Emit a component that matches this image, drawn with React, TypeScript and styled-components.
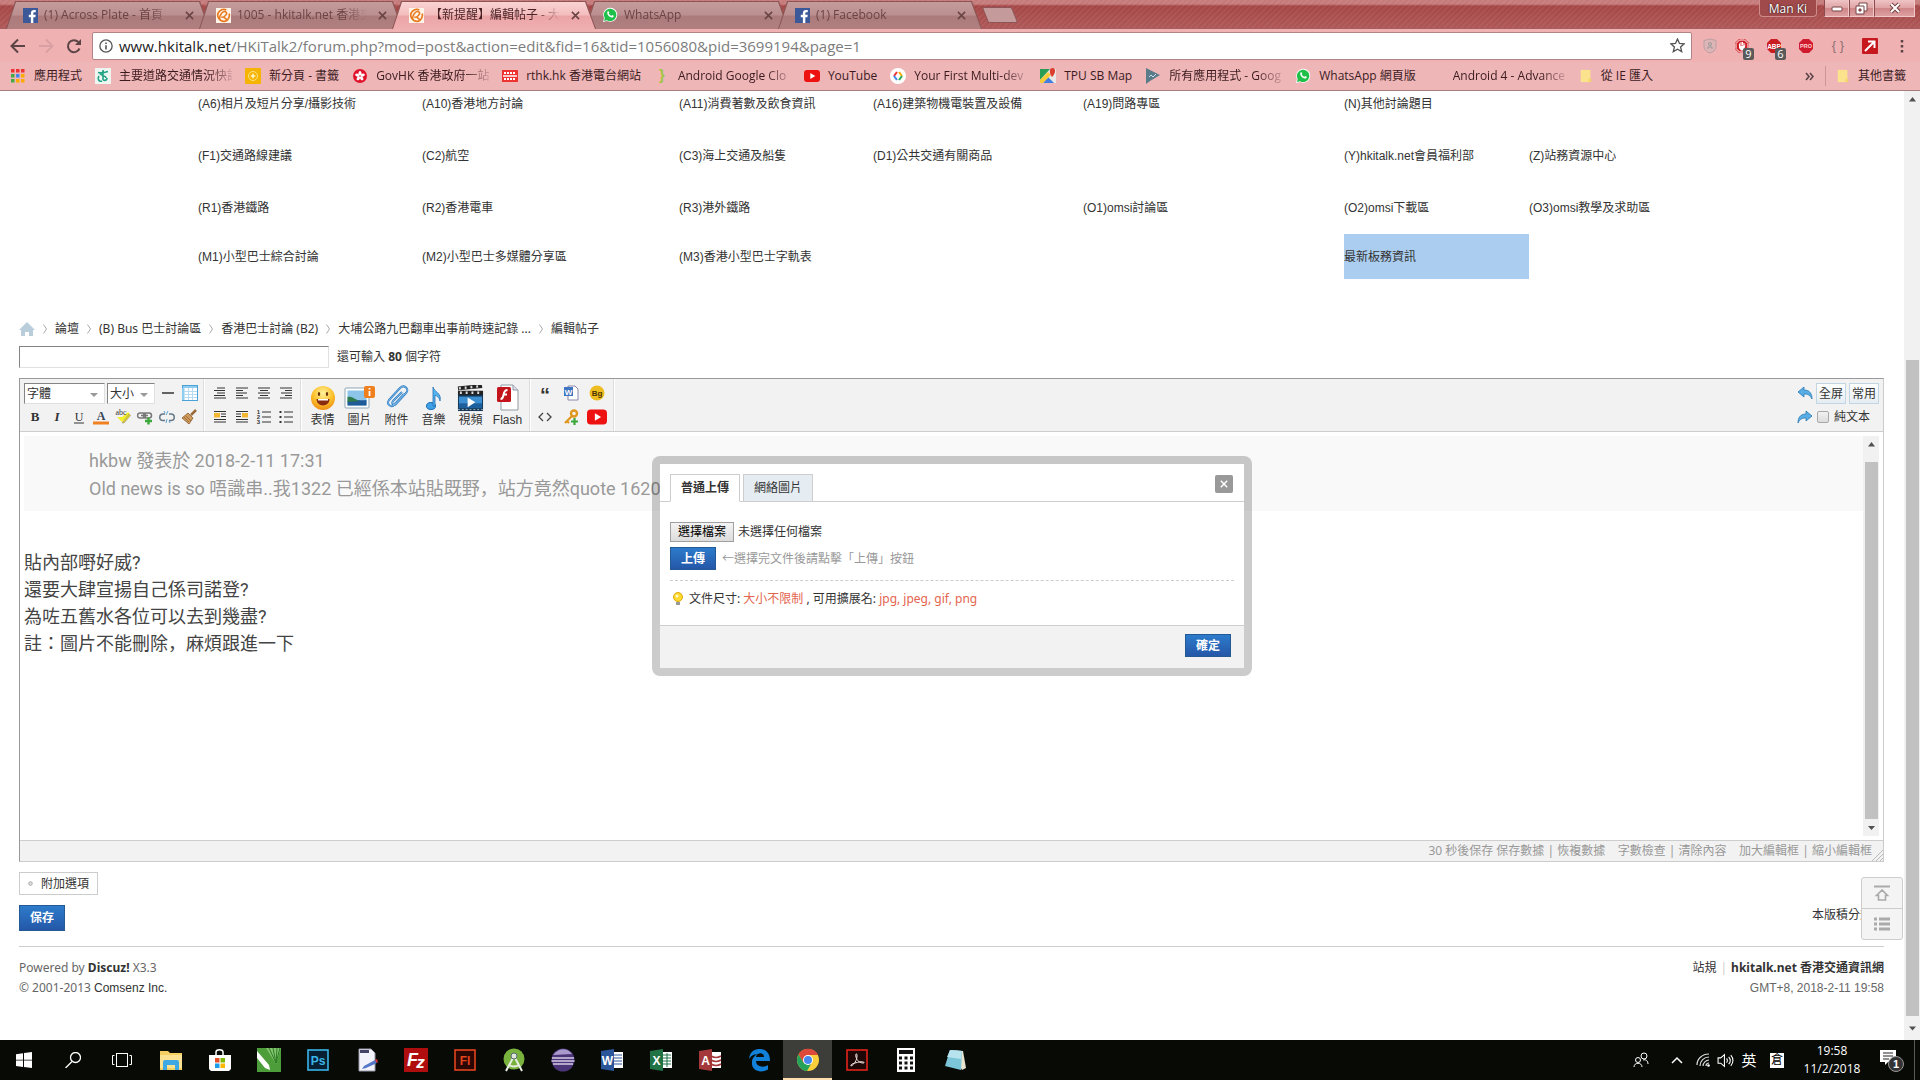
import React from 'react';
import styled, { createGlobalStyle } from 'styled-components';

const UI = `"Open Sans", "Noto Sans CJK TC", sans-serif`;
const ARIAL = `"Liberation Sans", "Noto Sans CJK TC", sans-serif`;
const TAHOMA = `"Noto Sans", "Noto Sans CJK TC", sans-serif`;
const DOC = `Roboto, "Noto Sans CJK JP", sans-serif`;

const Global = createGlobalStyle`
  * { box-sizing: border-box; }
  body { margin: 0; background: #fff; font: 12px/20px ${TAHOMA}; color: #333; }
  button, input, select { font: inherit; color: inherit; margin: 0; padding: 0; }
  button { border: 0; background: none; cursor: pointer; white-space: nowrap; }
  a { color: inherit; text-decoration: none; }
  svg { display: block; flex: none; }
  p { margin: 0; }
`;

const Screen = styled.div`
  height: 100vh;
  display: flex;
  flex-direction: column;
  overflow: hidden;
`;

/* ---------- browser frame ---------- */

const BrowserFrame = styled.header`
  flex: none;
  font-family: ${UI};
  border-bottom: 1px solid #a67c7e;
`;

const TabStrip = styled.div`
  display: flex;
  align-items: flex-start;
  height: 29px;
  padding: 0 5px 0 6px;
  border-bottom: 1px solid #a85d5f;
  background:
    repeating-linear-gradient(135deg, rgba(255, 255, 255, 0.05) 0 2px, transparent 2px 4px),
    linear-gradient(#c67b7b 0 4px, #a54646 6px, #af5757 28px);
`;

const Tab = styled.div<{ $active?: boolean }>`
  position: relative;
  z-index: ${(p) => (p.$active ? 2 : 1)};
  display: flex;
  align-items: center;
  gap: 6px;
  width: 204px;
  height: 28px;
  margin: 1px -11px 0 0;
  padding: 0 14px 0 17px;
  background: #8d5555;
  clip-path: polygon(0 100%, 9px 0, 194px 0, 100% 100%);
  color: ${(p) => (p.$active ? '#4a2226' : '#6b4444')};
  &::before {
    content: '';
    position: absolute;
    z-index: -1;
    inset: 1px 0 0;
    background: ${(p) =>
      p.$active
        ? 'linear-gradient(#f9d3d3, #f4bdbd 13px, #eba4a6 14px, #efafb1)'
        : 'linear-gradient(#c49b9b, #bb8f8f 13px, #ab7b7b 14px, #b08080)'};
    clip-path: polygon(1px 100%, 10px 0, 193px 0, calc(100% - 1px) 100%);
  }
`;

const TabTitle = styled.button`
  flex: 1;
  min-width: 0;
  overflow: hidden;
  text-align: left;
  mask-image: linear-gradient(90deg, #000 105px, transparent 130px);
`;

const IconButton = styled.button<{ $w?: number; $h?: number }>`
  position: relative;
  flex: none;
  display: grid;
  place-items: center;
  width: ${(p) => p.$w ?? 22}px;
  height: ${(p) => p.$h ?? 22}px;
`;

const NewTab = styled.button`
  width: 30px;
  height: 16px;
  margin: 7px 0 0 14px;
  border: 1px solid #8d5555;
  border-radius: 2px;
  background: #c49a9a;
  transform: skewX(22deg);
`;

const WindowControls = styled.div`
  display: flex;
  margin-left: auto;
`;

const UserButton = styled.button`
  height: 17px;
  width: 58px;
  margin-right: 7px;
  border: 1px solid #d08b8b;
  border-top: 0;
  border-radius: 0 0 4px 4px;
  background: #a14a4c;
  color: #fff;
  line-height: 18px;
  text-shadow: 0 0 2px #000;
`;

const WindowButton = styled.button<{ $w: number }>`
  display: grid;
  place-items: center;
  width: ${(p) => p.$w}px;
  height: 17px;
  border: 1px solid #f2c7c7;
  border-top: 0;
  border-left-color: #8b4a4c;
  background: linear-gradient(#efc3c4, #dfa3a5 50%, #cf8587 51%, #dda0a2);
`;

const Toolbar = styled.div`
  display: flex;
  align-items: center;
  height: 33px;
  padding: 0 2px 0 4px;
  background: #f0b1b3;
`;

const Omnibox = styled.label`
  flex: 1;
  display: flex;
  align-items: center;
  gap: 6px;
  height: 28px;
  margin: 0 2px 0 4px;
  padding: 0 6px;
  border: 1px solid #b08386;
  border-radius: 2px;
  background: #fff;
`;

const Url = styled.span`
  flex: 1;
  font-size: 15px;
  color: #7c7c7c;
  b { font-weight: 400; color: #1c1c1c; }
`;

const ExtBadge = styled.span`
  position: absolute;
  left: 17px;
  top: 18px;
  width: 11px;
  height: 12px;
  border-radius: 2px;
  background: #5a5a5a;
  color: #fff;
  font-size: 11px;
  line-height: 12px;
`;

const BookmarkBar = styled.nav`
  display: flex;
  align-items: center;
  gap: 13px;
  height: 28px;
  padding: 0 14px 0 10px;
  background: #efb6b8;
  color: #3b1b1e;
`;

const Bookmark = styled.a`
  display: flex;
  align-items: center;
  gap: 8px;
  white-space: nowrap;
`;

const BookmarkText = styled.span<{ $fade?: boolean }>`
  ${(p) =>
    p.$fade &&
    `width: 113px; overflow: hidden;
     mask-image: linear-gradient(90deg, #000 88px, transparent 118px);`}
`;

const BookmarkEnd = styled.div`
  display: flex;
  align-items: center;
  gap: 10px;
  margin-left: auto;
  > a { border-left: 1px solid #cf9496; padding-left: 10px; }
`;

/* ---------- scrollbars ---------- */

const ScrollTrack = styled.div`
  flex: none;
  display: flex;
  flex-direction: column;
  align-items: center;
  width: 16px;
  background: #f1f1f1;
`;

const Thumb = styled.div<{ $before: number }>`
  width: 13px;
  flex: 1;
  margin-top: ${(p) => p.$before}px;
  background: #c1c1c1;
`;

/* ---------- page ---------- */

const Viewport = styled.div`
  flex: 1;
  min-height: 0;
  display: flex;
`;

const Page = styled.main`
  position: relative;
  flex: 1;
  min-width: 0;
  overflow: hidden;
`;

const ForumGrid = styled.nav`
  display: grid;
  grid-template-columns: 224fr 257fr 194fr 210fr 261fr 185fr 177fr;
  grid-template-rows: 39px 52px 52px 45px;
  padding: 0 198px;
  font-family: ${ARIAL};
`;

const ForumCell = styled.a<{ $col: number; $row: number; $hot?: boolean }>`
  grid-column: ${(p) => p.$col};
  grid-row: ${(p) => p.$row};
  display: flex;
  align-items: center;
  white-space: nowrap;
  padding-bottom: ${(p) => (p.$row === 1 ? 13 : 0)}px;
  background: ${(p) => (p.$hot ? '#abcdef' : 'transparent')};
`;

const Content = styled.div`
  padding: 0 20px 0 19px;
`;

const Crumbs = styled.nav`
  display: flex;
  align-items: center;
  gap: 8px;
  height: 20px;
  margin-top: 40px;
`;

const TitleRow = styled.div`
  display: flex;
  align-items: center;
  gap: 8px;
  margin: 7px 0 10px;
`;

const TitleInput = styled.input`
  width: 310px;
  height: 22px;
  border: 1px solid;
  border-color: #848484 #e0e0e0 #e0e0e0 #848484;
  background: #fff;
`;

const Editor = styled.section`
  border: 1px solid;
  border-color: #999 #ccc #ccc #999;
`;

const EditorBar = styled.div`
  display: flex;
  height: 53px;
  border-bottom: 1px solid #cdcdcd;
  background: #f2f2f2;
`;

const Group = styled.div<{ $l: number; $r: number }>`
  display: grid;
  grid-template-rows: 22px 22px;
  row-gap: 2px;
  padding: 3px ${(p) => p.$r}px 0 ${(p) => p.$l}px;
  border-right: 1px solid #fff;
  box-shadow: inset -1px 0 #ddd;
`;

const Tools = styled.div<{ $gap?: number }>`
  display: flex;
  align-items: center;
  gap: ${(p) => p.$gap ?? 0}px;
`;

const SelectBox = styled.div<{ $w: number }>`
  position: relative;
  width: ${(p) => p.$w}px;
  height: 21px;
  margin-right: 2px;
  border: 1px solid;
  border-color: #848484 #e0e0e0 #e0e0e0 #848484;
  background: #fff;
  select {
    width: 100%;
    height: 19px;
    padding-left: 2px;
    border: 0;
    background: none;
    appearance: none;
    line-height: 18px;
  }
  &::after {
    content: '';
    position: absolute;
    right: 6px;
    top: 9px;
    border: 4px solid transparent;
    border-top-color: #999;
    pointer-events: none;
  }
`;

const BigTools = styled.div`
  display: flex;
  padding: 5px 4px 0 2px;
  border-right: 1px solid #fff;
  box-shadow: inset -1px 0 #ddd;
`;

const BigTool = styled.button`
  display: grid;
  grid-template-rows: 28px 16px;
  place-items: center;
  align-content: start;
  width: 37px;
  font-family: ${ARIAL};
  line-height: 16px;
`;

const EditorSide = styled(Group)`
  margin-left: auto;
  border: 0;
  box-shadow: none;
`;

const SideButton = styled.button`
  width: 30px;
  height: 21px;
  border: 1px solid #c2d5e3;
  background: linear-gradient(#fff, #e5edf2);
`;

const PlainToggle = styled.label`
  display: flex;
  align-items: center;
  gap: 5px;
  input {
    width: 12px;
    height: 12px;
    appearance: none;
    border: 1px solid #a8a8a8;
    border-radius: 2px;
    background: linear-gradient(#f2f2f2, #dcdcdc);
  }
`;

const EditorBody = styled.div`
  display: flex;
  height: 408px;
  padding: 4px;
`;

const Doc = styled.article`
  flex: 1;
  font-family: ${DOC};
  font-size: 18px;
  line-height: 27px;
  color: #444;
`;

const Quote = styled.blockquote`
  margin: 0 0 38px;
  padding: 11px 65px 8px;
  background: #f9f9f9;
  color: #999;
  line-height: 28px;
`;

const StatusBar = styled.div`
  position: relative;
  height: 21px;
  padding-right: 11px;
  border-top: 1px solid #cdcdcd;
  background: #f2f2f2;
  color: #999;
  text-align: right;
  white-space: pre;
`;

const Grip = styled.svg`
  position: absolute;
  right: 0;
  bottom: 0;
`;

const OptionsButton = styled.button`
  display: flex;
  align-items: center;
  gap: 8px;
  height: 23px;
  margin: 10px 0;
  padding: 0 8px;
  border: 1px solid #ccc;
`;

const BlueButton = styled.button<{ $h: number }>`
  height: ${(p) => p.$h}px;
  padding: 0 10px;
  border: 1px solid #235994;
  background: linear-gradient(#2d7bcb, #2557a8);
  color: #fff;
  font-weight: 700;
  line-height: 20px;
`;

const SubmitRow = styled.div`
  display: flex;
  align-items: flex-start;
  justify-content: space-between;
  height: 26px;
`;

const Footer = styled.footer`
  display: flex;
  justify-content: space-between;
  margin-top: 15px;
  padding-top: 11px;
  border-top: 1px solid #cdcdcd;
  color: #666;
  a { color: #333; }
`;

const Maker = styled.a`
  font-family: ${ARIAL};
`;

const FooterRight = styled.div`
  text-align: right;
  small { display: block; font: 12px/20px ${ARIAL}; }
  i { margin: 0 4px; color: #ccc; font-style: normal; }
`;

const FloatNav = styled.div`
  position: absolute;
  right: 1px;
  top: 786px;
  display: grid;
  width: 42px;
  border: 1px solid #cdcdcd;
  border-radius: 3px;
  background: #f4f4f4;
  button + button { border-top: 1px solid #cdcdcd; }
`;

/* ---------- upload dialog ---------- */

const Dialog = styled.section`
  position: absolute;
  left: calc(50% - 300px);
  top: 365px;
  width: 600px;
  border: 8px solid rgba(0, 0, 0, 0.2);
  border-radius: 8px;
  background: #fff;
  background-clip: padding-box;
`;

const DialogTabs = styled.div`
  display: flex;
  align-items: flex-end;
  gap: 3px;
  height: 38px;
  padding: 0 10px;
  border-bottom: 1px solid #cdcdcd;
`;

const DialogTab = styled.button<{ $active?: boolean }>`
  width: 70px;
  height: 28px;
  margin-bottom: -1px;
  border: 1px solid #cdcdcd;
  background: ${(p) => (p.$active ? '#fff' : '#e5edf2')};
  border-bottom-color: ${(p) => (p.$active ? '#fff' : '#cdcdcd')};
  font-weight: ${(p) => (p.$active ? 700 : 400)};
`;

const DialogClose = styled.button`
  display: grid;
  place-items: center;
  width: 18px;
  height: 18px;
  margin: 0 1px 8px auto;
  border-radius: 2px;
  background: #999;
`;

const DialogBody = styled.div`
  padding: 20px 10px 16px;
`;

const FileRow = styled.div`
  display: flex;
  align-items: center;
  gap: 4px;
  height: 20px;
  input { position: absolute; width: 1px; height: 1px; opacity: 0; }
  label {
    height: 20px;
    padding: 0 7px;
    border: 1px solid #a0a0a0;
    background: linear-gradient(#f4f4f4, #dcdcdc);
    color: #000;
    line-height: 18px;
  }
`;

const UploadRow = styled.div`
  display: flex;
  align-items: center;
  gap: 6px;
  margin-top: 5px;
  padding-bottom: 10px;
  border-bottom: 1px dashed #cdcdcd;
  color: #999;
`;

const Tip = styled.div`
  display: flex;
  align-items: center;
  gap: 5px;
  margin-top: 8px;
  padding-left: 2px;
  em { color: #e4654f; font-style: normal; }
`;

const DialogFooter = styled.div`
  display: flex;
  justify-content: flex-end;
  padding: 8px 13px 11px;
  border-top: 1px solid #cdcdcd;
  background: #f2f2f2;
`;

/* ---------- task bar ---------- */

const TaskBar = styled.footer`
  flex: none;
  display: flex;
  height: 40px;
  background: #080a06;
  color: #fff;
  font-family: ${UI};
`;

const Task = styled.button<{ $active?: boolean }>`
  display: grid;
  place-items: center;
  width: 49px;
  padding-top: ${(p) => (p.$active ? 2 : 0)}px;
  background: ${(p) => (p.$active ? '#3d3e3a' : 'none')};
  border-bottom: ${(p) => (p.$active ? '2px solid #ffdfae' : '0')};
  &:first-child { width: 48px; }
`;

const Tray = styled.div`
  display: flex;
  align-items: center;
  margin-left: auto;
  padding-right: 5px;
`;

const TrayItem = styled.button<{ $w: number }>`
  display: grid;
  place-items: center;
  width: ${(p) => p.$w}px;
  height: 40px;
  font-size: 15px;
`;

const Ime = styled.span`
  width: 14px;
  height: 15px;
  background: #fff;
  color: #000;
  font-size: 12px;
  line-height: 14px;
  text-align: center;
`;

const Clock = styled.time`
  width: 72px;
  margin: 0 6px 0 3px;
  text-align: center;
  line-height: 18px;
`;

const TrayEdge = styled.span`
  width: 1px;
  height: 40px;
  background: #5a5a5a;
`;

/* ---------- drawings ---------- */

type Art = React.ReactNode;
const Svg = ({ s = 16, h, vb, children }: { s?: number; h?: number; vb?: string; children: Art }) => (
  <svg width={s} height={h ?? s} viewBox={vb ?? '0 0 16 16'} fill="none" aria-hidden="true">
    {children}
  </svg>
);

const letter = (t: string, x: number, y: number, size: number, fill: string, extra: object = {}) => (
  <text x={x} y={y} fontSize={size} fill={fill} textAnchor="middle" fontWeight="700" fontFamily="Liberation Sans, sans-serif" {...extra}>
    {t}
  </text>
);

const Facebook = () => (
  <Svg s={15}>
    <rect width="16" height="16" fill="#3b5998" />
    <path d="M11 16V9.8h2.2l.4-2.5H11V5.8c0-.9.4-1.3 1.3-1.3h1.3V2.2C13 2.1 12.400 2 11.700 2 9.700 2 8.400 3.200 8.400 5.400v1.900H6.200v2.500h2.200V16z" fill="#fff" />
  </Svg>
);
const HkiTalk = () => (
  <Svg s={15}>
    <rect width="16" height="16" fill="#fff4e8" />
    <path d="M11 2C5 0 1 5 2 9s5 6 8 5 5-5 4-8" stroke="#e87a20" strokeWidth="1.800" />
    <path d="M4 13C3 7 8 2 11 4.500c1.500 2-3 6.500-5.500 5M8 9.500l4 3.500" stroke="#e87a20" strokeWidth="1.600" />
  </Svg>
);
const WhatsApp = () => (
  <Svg>
    <path d="M1 15l1-4A7 7 0 1 1 5 14z" fill="#fff" />
    <path d="M2 14l.8-3A6.200 6.200 0 1 1 5 13.200z" fill="#1fc04a" />
    <path d="M5.500 4.500c1-.8 1.400.2 1.700 1 .2.500-.6.900-.3 1.300.6 1 1.300 1.700 2.300 2 .5 0 .8-1 1.300-.8 2.500 1 .8 2.600-.6 2.500C7 10.300 4.400 7 5.500 4.500z" fill="#fff" />
  </Svg>
);
const Close = ({ c = '#6b4444', s = 9 }) => (
  <Svg s={s} vb="0 0 10 10">
    <path d="M1 1l8 8M9 1L1 9" stroke={c} strokeWidth="1.800" />
  </Svg>
);
const Youtube = ({ s = 16 }) => (
  <Svg s={s}>
    <rect y="2" width="16" height="12" rx="3" fill="#e11" />
    <path d="M6.300 5l5 3-5 3z" fill="#fff" />
  </Svg>
);
const Folder = () => (
  <Svg s={14}>
    <path d="M2 1h11v14H2z" fill="#fbe38e" />
    <path d="M11 11h3v4h-3z" fill="#f3d26c" />
  </Svg>
);

const bookmarks: { t: string; i: Art; fade?: boolean }[] = [
  {
    t: '應用程式',
    i: (
      <Svg>
        {['#e33', '#e33', '#e33', '#4a4', '#48e', '#fa0', '#4a4', '#fa0', '#fa0'].map((c, n) => (
          <rect key={n} x={1 + (n % 3) * 5} y={1 + Math.floor(n / 3) * 5} width="3.500" height="3.500" fill={c} />
        ))}
      </Svg>
    ),
  },
  {
    t: '主要道路交通情況快訊',
    fade: true,
    i: (
      <Svg>
        <rect width="16" height="16" fill="#eef6f2" />
        <path d="M3 4.500c4 1 7 0 10-1M8 2v9c0 2 4 2 4-1M4 8c-2 3 0 6 3 5M5 5c0 3 6 2 6 5" stroke="#1fa383" strokeWidth="1.600" />
      </Svg>
    ),
  },
  {
    t: '新分頁 - 書籤',
    i: (
      <Svg>
        <rect width="16" height="16" rx="1" fill="#f5b400" />
        <circle cx="8" cy="8" r="4.500" stroke="#fbe08a" />
        <path d="M8 5l1 2 2 1-2 1-1 2-1-2-2-1 2-1z" fill="#fff3c4" />
      </Svg>
    ),
  },
  {
    t: 'GovHK 香港政府一站',
    fade: true,
    i: (
      <Svg>
        <circle cx="8" cy="8" r="7" fill="#e0112b" />
        {[0, 72, 144, 216, 288].map((a) => (
          <ellipse key={a} cx="8" cy="5.200" rx="1.500" ry="2.200" fill="#fff" transform={`rotate(${a} 8 8)`} />
        ))}
      </Svg>
    ),
  },
  {
    t: 'rthk.hk 香港電台網站',
    i: (
      <Svg>
        <rect y="2" width="16" height="12" fill="#e33" />
        <path d="M1 8h14" stroke="#fff" strokeWidth="1.500" />
        <path d="M2 5h12M2 11h12" stroke="#fff" strokeWidth="2" strokeDasharray="2 1" />
      </Svg>
    ),
  },
  { t: 'Android Google Clo', fade: true, i: <Svg>{letter('}', 8, 12, 15, '#9fc63b')}</Svg> },
  { t: 'YouTube', i: <Youtube /> },
  {
    t: 'Your First Multi-dev',
    fade: true,
    i: (
      <Svg>
        <circle cx="8" cy="8" r="8" fill="#fff" />
        <path d="M7 4L4 8" stroke="#e33" strokeWidth="2" />
        <path d="M4 8l3 4" stroke="#48e" strokeWidth="2" />
        <path d="M9 4l3 4" stroke="#fa0" strokeWidth="2" />
        <path d="M12 8l-3 4" stroke="#2a5" strokeWidth="2" />
      </Svg>
    ),
  },
  {
    t: 'TPU SB Map',
    i: (
      <Svg>
        <path d="M0 1h16v14H0z" fill="#e8e8e8" />
        <path d="M0 1h10L0 12z" fill="#2a9d55" />
        <path d="M3 15l5-6 6 6z" fill="#3f7de0" />
        <path d="M0 12l8-8 3 3-8 8H0z" fill="#f7ca3a" />
        <path d="M12 9C9 5 9 0 12.500 0S16 5 12 9z" fill="#dc3d31" />
      </Svg>
    ),
  },
  {
    t: '所有應用程式 - Goog',
    fade: true,
    i: (
      <Svg>
        <path d="M1 0l2 1 12 6-10 6-4 3z" fill="#5a7b88" />
        <path d="M4 9l2-2 2 2 3-3" stroke="#cde" />
      </Svg>
    ),
  },
  { t: 'WhatsApp 網頁版', i: <WhatsApp /> },
  { t: 'Android 4 - Advance', fade: true, i: <Svg>{null}</Svg> },
  { t: '從 IE 匯入', i: <Folder /> },
];

const octagon = 'M5 1h6l4 4v6l-4 4H5l-4-4V5z';
const extensions: { n: string; i: Art; badge?: string }[] = [
  {
    n: 'shield',
    i: (
      <Svg>
        <path d="M8 1l6 1.500V8c0 4-3 6-6 7-3-1-6-3-6-7V2.500z" fill="#ddb5b7" stroke="#b9a0a2" />
        <circle cx="8" cy="6" r="1.500" stroke="#999" />
        <path d="M6 11V9h4v2" stroke="#999" />
      </Svg>
    ),
  },
  {
    n: 'AdBlock',
    badge: '9',
    i: (
      <Svg>
        <path d={octagon} fill="#d01f26" />
        <path d="M5.500 2h5l3.500 3.500v5L10.500 14h-5L2 10.500v-5z" stroke="#fff" />
        <path d="M5.500 8V5.500M7 7V4M8.500 7V4M10 8V5" stroke="#fff" strokeWidth="1.100" />
        <path d="M5 7.500h5.500l1-1-1 4-1.500 2H7L5 10z" fill="#fff" />
      </Svg>
    ),
  },
  { n: 'Adblock Plus', badge: '6', i: <Svg><path d={octagon} fill="#c91d22" />{letter('ABP', 8, 10.500, 6.500, '#fff')}</Svg> },
  { n: 'Adblock Pro', i: <Svg><path d={octagon} fill="#cf1b2d" />{letter('PRO', 8, 10, 5.500, '#ffd6d6')}</Svg> },
  { n: 'JSON', i: <Svg>{letter('{ }', 8, 12, 13, '#8c7072', { fontWeight: 400 })}</Svg> },
  {
    n: 'jump',
    i: (
      <Svg>
        <rect width="16" height="16" rx="1" fill="#c6191e" />
        <path d="M3 13l9-9M6 3.500h6.500V10" stroke="#fff" strokeWidth="2" />
      </Svg>
    ),
  },
  { n: 'menu', i: <Svg><path d="M8 2v2.500M8 7v2.500M8 12v2.500" stroke="#5b4446" strokeWidth="2.500" /></Svg> },
];

const forum: [number, number, string][] = [
  [1, 1, '(A6)相片及短片分享/攝影技術'], [2, 1, '(A10)香港地方討論'], [3, 1, '(A11)消費著數及飲食資訊'],
  [4, 1, '(A16)建築物機電裝置及設備'], [5, 1, '(A19)問路專區'], [6, 1, '(N)其他討論題目'],
  [1, 2, '(F1)交通路線建議'], [2, 2, '(C2)航空'], [3, 2, '(C3)海上交通及船隻'], [4, 2, '(D1)公共交通有關商品'],
  [6, 2, '(Y)hkitalk.net會員福利部'], [7, 2, '(Z)站務資源中心'],
  [1, 3, '(R1)香港鐵路'], [2, 3, '(R2)香港電車'], [3, 3, '(R3)港外鐵路'], [5, 3, '(O1)omsi討論區'],
  [6, 3, '(O2)omsi下載區'], [7, 3, '(O3)omsi教學及求助區'],
  [1, 4, '(M1)小型巴士綜合討論'], [2, 4, '(M2)小型巴士多媒體分享區'], [3, 4, '(M3)香港小型巴士字軌表'],
  [6, 4, '最新板務資訊'],
];

const crumbs = ['論壇', '(B) Bus 巴士討論區', '香港巴士討論 (B2)', '大埔公路九巴翻車出事前時速記錄 ...', '編輯帖子'];

const lines = (d: string) => <Svg><path d={d} stroke="#333" strokeWidth="1.100" /></Svg>;
const serif = { fontFamily: 'Liberation Serif, serif' };

const formatTools: [string, Art][] = [
  ['bold', <Svg>{letter('B', 8, 12, 13, '#333', serif)}</Svg>],
  ['italic', <Svg>{letter('I', 8, 12, 13, '#333', { ...serif, fontStyle: 'italic' })}</Svg>],
  ['underline', <Svg>{letter('U', 8, 11.500, 12, '#333', { ...serif, fontWeight: 400 })}<path d="M3 14h10" stroke="#333" /></Svg>],
  ['colour', <Svg>{letter('A', 8, 10.500, 12, '#345', serif)}<path d="M0 14h16" stroke="#f08020" strokeWidth="3" /></Svg>],
  [
    'highlight',
    <Svg>
      <path d="M2 8l5 5 8-8-2-2-6 5z" fill="#f3ee2e" />
      <path d="M7 14l7-9 1.500 1.500L9 14z" fill="#e0d020" stroke="#887" strokeWidth=".5" />
      {letter('abc', 6, 6, 8, '#333', { ...serif, fontWeight: 400 })}
    </Svg>,
  ],
  [
    'link',
    <Svg>
      <rect x=".5" y="4" width="8" height="5" rx="2.500" stroke="#777" strokeWidth="1.500" />
      <rect x="6.500" y="4" width="8" height="5" rx="2.500" stroke="#777" strokeWidth="1.500" />
      <path d="M4 6.500h7" stroke="#777" strokeWidth="1.500" />
      <path d="M11.500 8.500v7M8 12h7" stroke="#3aa83a" strokeWidth="2.400" />
    </Svg>,
  ],
  [
    'unlink',
    <Svg>
      <path d="M6 5H4a3 3 0 0 0 0 6.500h2M10 5h2a3 3 0 0 1 0 6.500h-2" stroke="#678" strokeWidth="1.500" />
      <path d="M9 2L7 6M8 10l-1 4M5 2l1 2M11 14l-1-2" stroke="#58a0d0" />
    </Svg>,
  ],
  [
    'clean',
    <Svg>
      <path d="M15 1l-5 5" stroke="#9a6a3a" strokeWidth="2.500" />
      <path d="M7 4l5 5-4 6-7-6z" fill="#cf9b5c" stroke="#8a5a2a" strokeWidth=".8" />
      <path d="M5 7l5 5M3 8l5 5" stroke="#8a5a2a" strokeWidth=".7" />
    </Svg>,
  ],
];

const alignTools: [string, Art][] = [
  ['indent', lines('M5 3h8M2 5.500h11M5 8h8M2 10.500h11M2 13h12')],
  ['left', lines('M2 3h12M2 5.500h7M2 8h11M2 10.500h7M2 13h12')],
  ['center', lines('M2 3h12M4 5.500h8M2 8h12M4 10.500h8M2 13h12')],
  ['right', lines('M2 3h12M7 5.500h7M3 8h11M7 10.500h7M2 13h12')],
];
const listTools: [string, Art][] = [
  ['float left', <Svg><path d="M2 2.500h12M9 5h5M9 7.500h5M2 10.500h12M2 13h12" stroke="#333" strokeWidth="1.200" /><rect x="2" y="4" width="6" height="4.500" fill="#f2b632" /></Svg>],
  ['float right', <Svg><path d="M2 2.500h12M2 5h5M2 7.500h5M2 10.500h12M2 13h12" stroke="#333" strokeWidth="1.200" /><rect x="8" y="4" width="6" height="4.500" fill="#f2b632" /></Svg>],
  ['numbers', <Svg><path d="M6 3h9M6 8h9M6 13h9" stroke="#333" />{letter('1', 2.500, 5, 6, '#333')}{letter('2', 2.500, 10, 6, '#333')}{letter('3', 2.500, 15, 6, '#333')}</Svg>],
  ['bullets', <Svg><path d="M6 3h9M6 8h9M6 13h9" stroke="#333" /><path d="M1.500 3h2M1.500 8h2M1.500 13h2" stroke="#333" strokeWidth="2" /></Svg>],
];

const bigTools: [string, Art][] = [
  [
    '表情',
    <Svg s={26} vb="0 0 26 26">
      <defs>
        <radialGradient id="face" cx=".5" cy=".3" r=".7"><stop stopColor="#fff3a0" /><stop offset=".6" stopColor="#fcc02a" /><stop offset="1" stopColor="#ee8f12" /></radialGradient>
      </defs>
      <circle cx="13" cy="13" r="12" fill="url(#face)" />
      <ellipse cx="9" cy="9" rx="1.200" ry="2" fill="#6b3208" />
      <ellipse cx="17" cy="9" rx="1.200" ry="2" fill="#6b3208" />
      <path d="M6.500 14h13c0 8.500-13 8.500-13 0z" fill="#8a2c10" />
      <path d="M8 14h10v1.500H8z" fill="#fff" />
    </Svg>,
  ],
  [
    '圖片',
    <Svg s={32} h={26} vb="0 0 32 26">
      <rect x="1" y="3" width="24" height="20" rx="1" fill="#fff" stroke="#8fa6b5" />
      <rect x="3.500" y="5.500" width="19" height="15" fill="#8cc4ea" />
      <path d="M3.500 16c6-3 10 0 19-1v5.500h-19z" fill="#1f5b96" />
      <path d="M3.500 12c5-1 6 2 12 4l-12 1z" fill="#2f7a4a" />
      <rect x="20" y="1" width="11" height="12" rx="2" fill="#f0801e" />
      <path d="M25.500 3v1.500M25.500 6v5" stroke="#fff" strokeWidth="1.800" />
    </Svg>,
  ],
  [
    '附件',
    <Svg s={26} vb="0 0 26 26">
      <path d="M20 9L10 20c-3 3-8-1-5-5L16 3c4-4 10 1 6 5L12 19c-2 2-5 0-3-3l9-9" stroke="#2f7fc6" strokeWidth="2" />
      <path d="M20 9L10 20c-3 3-8-1-5-5L16 3c4-4 10 1 6 5L12 19c-2 2-5 0-3-3l9-9" stroke="#a8d4f5" strokeWidth=".6" />
    </Svg>,
  ],
  [
    '音樂',
    <Svg s={26} vb="0 0 26 26">
      <ellipse cx="10" cy="21" rx="4.500" ry="3.500" fill="#3fa0e6" stroke="#1e70b8" />
      <path d="M12 21V2c1 5 9 6 7 14-1-4-3-5-5-6v11z" fill="#58b4f0" stroke="#1e70b8" strokeWidth=".8" />
    </Svg>,
  ],
  [
    '視頻',
    <Svg s={27} h={27} vb="0 0 28 28">
      <rect x="1" y="9" width="26" height="18" fill="#163550" />
      <rect x="2" y="12" width="24" height="12" fill="#3c8fd0" />
      <path d="M2 19h24v5H2z" fill="#1d5f9a" />
      <path d="M11 13l8 5-8 5z" fill="#fff" />
      <path d="M1 8h26M1 3.500l25-2.500" stroke="#222" strokeWidth="4" />
      <path d="M3 8h24M2 3.500l24-2.500" stroke="#ddd" strokeWidth="2.500" strokeDasharray="2 4" />
      <path d="M1 25.500h26" stroke="#9bc" strokeDasharray="2 2" />
    </Svg>,
  ],
  [
    'Flash',
    <Svg s={26} h={28} vb="0 0 26 28">
      <path d="M6 1h12l5 5v20H6z" fill="#fff" stroke="#8f9aa0" />
      <path d="M18 1v5h5" fill="#dde" stroke="#8f9aa0" />
      <rect x="2" y="3" width="14" height="15" rx="1.500" fill="#c4141b" />
      <path d="M12.500 6c-3 0-3.500 2-4 5-.4 2.500-1.200 4-3 4M8 10.500h4" stroke="#fff" strokeWidth="2" />
    </Svg>,
  ],
];

const extraTop: [string, Art][] = [
  ['quote', <Svg>{letter('“', 8, 17, 20, '#333')}</Svg>],
  ['word', <Svg><path d="M5 1h7l3 3v11H5z" fill="#fff" stroke="#88a" /><rect x="1" y="2" width="9" height="9" fill="#3f74c0" />{letter('W', 5.500, 9.500, 8, '#fff')}</Svg>],
  ['background', <Svg><circle cx="8" cy="8" r="7.500" fill="#edbd22" />{letter('Bg', 8, 11, 8, '#4a3200')}</Svg>],
];
const extraBottom: [string, Art][] = [
  ['code', <Svg><path d="M6 4L2 8l4 4M10 4l4 4-4 4" stroke="#444" strokeWidth="1.300" /></Svg>],
  [
    'key',
    <Svg>
      <circle cx="11" cy="4.500" r="3" stroke="#e0961c" strokeWidth="2.400" />
      <path d="M9 7l-7 7M4 12l2 2" stroke="#e0961c" strokeWidth="2.200" />
      <path d="M11.500 9v7M8 12.500h7" stroke="#3aa83a" strokeWidth="2.200" />
    </Svg>,
  ],
  ['youtube', <Youtube s={20} />],
];

const undo = (flip: boolean) => (
  <Svg>
    <path transform={flip ? 'translate(16 0) scale(-1 1)' : undefined} d="M1 7l6-5v3c6 0 8 4 8 9-2-4-4-5-8-5v3z" fill="#58aee4" stroke="#2a78b4" strokeWidth=".8" />
  </Svg>
);

const office = (c: string, t: string, body: Art) => (
  <Svg s={24} vb="0 0 24 24">
    <path d="M12 4h11v16H12z" fill="#fff" />
    {body}
    <path d="M1 3l13-2v22L1 21z" fill={c} />
    {letter(t, 7.500, 16.500, 12, '#fff')}
  </Svg>
);
const boxed = (c: string, bg: string, t: string) => (
  <Svg s={24} vb="0 0 24 24">
    <rect x="2" y="2" width="20" height="20" fill={bg} stroke={c} strokeWidth="1.600" />
    {letter(t, 12, 16.500, 12, c)}
  </Svg>
);

const tasks: { n: string; i: Art; active?: boolean }[] = [
  { n: 'Start', i: <Svg><path d="M0 2.200l7-1v6.500H0zM8 1l8-1v7.700H8zM0 8.500h7V15l-7-1zM8 8.500h8V16l-8-1z" fill="#fff" /></Svg> },
  { n: 'Search', i: <Svg><circle cx="10.500" cy="5.500" r="5" stroke="#fff" strokeWidth="1.300" /><path d="M7 9.500L.5 16" stroke="#fff" strokeWidth="1.300" /></Svg> },
  { n: 'Task view', i: <Svg s={22} h={16} vb="0 0 22 16"><rect x="5.500" y="1.500" width="11" height="13" stroke="#fff" /><path d="M3.500 3.500h-2v9h2M18.500 3.500h2v9h-2" stroke="#fff" /></Svg> },
  { n: 'Explorer', i: <Svg s={24} vb="0 0 24 24"><path d="M1 3h8l2 2h12v17H1z" fill="#f4cf62" /><path d="M1 7h22v13H1z" fill="#fbe292" /><path d="M4 22v-8q0-2 2-2h12q2 0 2 2v8h-4v-5H8v5z" fill="#3ea8e4" /></Svg> },
  { n: 'Store', i: <Svg s={24} vb="0 0 24 24"><path d="M8 7V4c0-3 7-3 7 0v3" stroke="#fff" strokeWidth="1.500" /><path d="M1 7h22v14l-2 2H3l-2-2z" fill="#fff" /><path d="M7 10h4.500v4.500H7z" fill="#e5502a" /><path d="M12.500 10H17v4.500h-4.500z" fill="#7eb900" /><path d="M7 15.500h4.500V20H7z" fill="#1a9fe8" /><path d="M12.500 15.500H17V20h-4.500z" fill="#fbb800" /></Svg> },
  { n: 'Corel', i: <Svg s={24} vb="0 0 24 24"><rect width="24" height="24" fill="#4d9e3a" /><path d="M9 0h15L19 16z" fill="#83c36d" /><path d="M12 0l7 15L16 0M20 0l-1 15 4-15" stroke="#2d7d27" /><path d="M0 3l12 14 1 5-5-2L0 10z" fill="#fff" /></Svg> },
  { n: 'Photoshop', i: boxed('#39b5e8', '#071f33', 'Ps') },
  { n: 'Editor', i: <Svg s={24} vb="0 0 24 24"><path d="M4 1h12l4 4v18H4z" fill="#f2f2fa" stroke="#99a" /><path d="M5 2h9v3H5z" fill="#446" /><path d="M20 12L9 18l-2 3 4-1 11-5z" fill="#5577c8" /><path d="M20 12l2-1 1 3-1 1z" fill="#d33" /></Svg> },
  { n: 'FileZilla', i: <Svg s={24} vb="0 0 24 24"><rect width="24" height="24" fill="#b00e0e" />{letter('F', 8.500, 18, 18, '#fff', { fontStyle: 'italic' })}{letter('z', 16.500, 20, 17, '#fff', { fontStyle: 'italic' })}</Svg> },
  { n: 'Flash', i: boxed('#e2441d', '#2b0703', 'Fl') },
  { n: 'Android Studio', i: <Svg s={24} vb="0 0 24 24"><circle cx="12" cy="11" r="10.500" fill="#79b33e" /><path d="M12 8L4 23M12 8l8 15M7 17q5 3 10 0" stroke="#e8eee4" strokeWidth="2" /><circle cx="12" cy="8" r="3" fill="#dfe8d8" stroke="#567" /></Svg> },
  { n: 'Eclipse', i: <Svg s={24} vb="0 0 24 24"><circle cx="12" cy="12" r="11.500" fill="#4b3578" /><path d="M2 7C8-1 17 0 21 6z" fill="#a99acb" /><path d="M1 10h22M.5 13h23M2 16h20" stroke="#d5cde6" strokeWidth="1.300" /></Svg> },
  { n: 'Word', i: office('#2b579a', 'W', <path d="M13 7h9M13 10h9M13 13h9M13 16h9" stroke="#2b579a" />) },
  { n: 'Excel', i: office('#217346', 'X', <path d="M13 7h9M13 10h9M13 13h9M13 16h9M18 5v14" stroke="#217346" />) },
  { n: 'Access', i: office('#a4373a', 'A', <path d="M13 8q5 3 10 0M13 12q5 3 10 0M13 16q5 3 10 0" stroke="#a4373a" strokeWidth="1.500" />) },
  { n: 'Edge', i: <Svg s={24} vb="0 0 24 24"><path d="M2 11C3 3 8 1 13 1c7 0 10 5 10 12H9c0 6 8 7 12 4v4.500C13 26 4 22 5 14c0-4 3-7 6-8-5 0-8 3-9 5zm7-2h8c0-5-7-5-8 0z" fill="#1281dc" /></Svg> },
  {
    n: 'Chrome',
    active: true,
    i: (
      <Svg s={24} vb="0 0 24 24">
        <circle cx="12" cy="12" r="11" fill="#f9cf3c" />
        <path d="M2.500 6.500A11 11 0 0 1 22 7H12L7.500 15z" fill="#dd4a3c" />
        <path d="M2.500 6.500L7.700 15H12l3 1-4 7A11 11 0 0 1 2.500 6.500z" fill="#26a35a" />
        <circle cx="12" cy="12" r="5" fill="#fff" />
        <circle cx="12" cy="12" r="4" fill="#4688f0" />
      </Svg>
    ),
  },
  { n: 'Acrobat', i: <Svg s={24} vb="0 0 24 24"><rect x="2" y="2" width="20" height="20" fill="#1c0606" stroke="#e0241b" strokeWidth="1.600" /><path d="M6 18c3-1 6-6 6-10 0-4-2-2-1 1 1 4 4 6 7 6s0-2-4-1-9 2-8 4z" stroke="#f3e6e6" /></Svg> },
  { n: 'Calculator', i: <Svg s={20} h={24} vb="0 0 20 24"><rect x="1" width="18" height="24" fill="#fff" /><path d="M3 2h14v4H3z" fill="#111" /><path d="M3 10h14M3 15h14M3 20h14" stroke="#111" strokeWidth="3" strokeDasharray="3 2.500" /></Svg> },
  { n: 'Notepad', i: <Svg s={24} vb="0 0 24 24"><path d="M8 2l12 1 3 17-4 2z" fill="#e8e4d0" /><path d="M7 2l12 1-1 19-16-4z" fill="#7cc4d8" /><path d="M7 2l12 1-1 8-14-2z" fill="#b6e3ee" /></Svg> },
];

const ToolRow = ({ items, w = 22 }: { items: [string, Art][]; w?: number }) => (
  <>
    {items.map(([n, i]) => (
      <IconButton key={n} aria-label={n} $w={w}>{i}</IconButton>
    ))}
  </>
);

const Arrow = ({ down, tall = 17 }: { down?: boolean; tall?: number }) => (
  <svg width="17" height={tall} viewBox="0 0 17 17" aria-hidden="true">
    <path d={down ? 'M5 7h7l-3.500 4z' : 'M5 10.500h7L8.500 6z'} fill="#505050" />
  </svg>
);

const tabs: { t: string; i: Art; active?: boolean }[] = [
  { t: '(1) Across Plate - 首頁', i: <Facebook /> },
  { t: '1005 - hkitalk.net 香港交', i: <HkiTalk /> },
  { t: '【新提醒】編輯帖子 - 大', i: <HkiTalk />, active: true },
  { t: 'WhatsApp', i: <WhatsApp /> },
  { t: '(1) Facebook', i: <Facebook /> },
];

export default function App() {
  return (
    <Screen>
      <Global />
      <BrowserFrame>
        <TabStrip>
          {tabs.map((t) => (
            <Tab key={t.t} $active={t.active}>
              {t.i}
              <TabTitle>{t.t}</TabTitle>
              <IconButton $w={14} $h={16} aria-label="close tab"><Close /></IconButton>
            </Tab>
          ))}
          <NewTab aria-label="new tab" />
          <WindowControls>
            <UserButton>Man Ki</UserButton>
            <WindowButton $w={25} aria-label="minimize"><Svg s={12} vb="0 0 12 12"><rect x="1" y="5" width="10" height="4" rx="1" fill="#fff" stroke="#744" /></Svg></WindowButton>
            <WindowButton $w={25} aria-label="restore"><Svg s={13} vb="0 0 13 13"><path d="M4 1h8v8H4z" stroke="#744" fill="#fff" /><path d="M1 4h8v8H1z" fill="#fff" stroke="#744" /><path d="M4 7h2v2H4z" fill="#a55" stroke="#744" /></Svg></WindowButton>
            <WindowButton $w={41} aria-label="close"><Svg s={12} vb="0 0 12 12"><path d="M2 2l8 8M10 2l-8 8" stroke="#744" strokeWidth="4" /><path d="M2 2l8 8M10 2l-8 8" stroke="#fff" strokeWidth="2" /></Svg></WindowButton>
          </WindowControls>
        </TabStrip>
        <Toolbar>
          <IconButton $w={28} aria-label="back"><Svg><path d="M15 8H2M8 1.500L1.500 8 8 14.500" stroke="#5b4446" strokeWidth="2" /></Svg></IconButton>
          <IconButton $w={28} aria-label="forward"><Svg><path d="M1 8h13M8 1.500L14.500 8 8 14.500" stroke="#d9a0a3" strokeWidth="2" /></Svg></IconButton>
          <IconButton $w={28} aria-label="reload"><Svg><path d="M13.500 10.500A6 6 0 1 1 12.300 4" stroke="#5b4446" strokeWidth="2" /><path d="M15 1v6H9z" fill="#5b4446" /></Svg></IconButton>
          <Omnibox>
            <Svg s={14}><circle cx="8" cy="8" r="7" stroke="#555" strokeWidth="1.500" /><path d="M8 7v5M8 4v1.800" stroke="#555" strokeWidth="1.800" /></Svg>
            <Url><b>www.hkitalk.net</b>/HKiTalk2/forum.php?mod=post&amp;action=edit&amp;fid=16&amp;tid=1056080&amp;pid=3699194&amp;page=1</Url>
            <Svg s={15}><path d="M8 1l2.100 4.800 5 .4-3.800 3.400 1.200 5L8 12l-4.500 2.600 1.200-5L.9 6.200l5-.4z" stroke="#555" strokeWidth="1.400" /></Svg>
          </Omnibox>
          {extensions.map((e) => (
            <IconButton key={e.n} $w={32} $h={32} aria-label={e.n}>
              {e.i}
              {e.badge && <ExtBadge>{e.badge}</ExtBadge>}
            </IconButton>
          ))}
        </Toolbar>
        <BookmarkBar>
          {bookmarks.map((b) => (
            <Bookmark key={b.t} href="#">
              {b.i}
              <BookmarkText $fade={b.fade}>{b.t}</BookmarkText>
            </Bookmark>
          ))}
          <BookmarkEnd>
            <IconButton $w={10} $h={20} aria-label="more bookmarks"><Svg s={9} vb="0 0 9 9"><path d="M1 1l3 3.500L1 8M5 1l3 3.500L5 8" stroke="#5b4446" strokeWidth="1.600" /></Svg></IconButton>
            <Bookmark href="#"><Folder />其他書籤</Bookmark>
          </BookmarkEnd>
        </BookmarkBar>
      </BrowserFrame>

      <Viewport>
        <Page>
          <ForumGrid>
            {forum.map(([c, r, t]) => (
              <ForumCell key={t} href="#" $col={c} $row={r} $hot={t === '最新板務資訊'}>{t}</ForumCell>
            ))}
          </ForumGrid>

          <Content>
            <Crumbs>
              <Svg><path d="M8 1L0 9h2v6h4v-4h4v4h4V9h2z" fill="#b9cddb" /></Svg>
              {crumbs.map((c) => (
                <React.Fragment key={c}>
                  <Svg s={4} h={10} vb="0 0 4 10"><path d="M.5.5L3.500 5l-3 4.500" stroke="#aaa" /></Svg>
                  <a href="#">{c}</a>
                </React.Fragment>
              ))}
            </Crumbs>

            <TitleRow>
              <TitleInput id="subject" />
              <label htmlFor="subject">還可輸入 <b>80</b> 個字符</label>
            </TitleRow>

            <Editor>
              <EditorBar>
                <Group $l={4} $r={3}>
                  <Tools>
                    <SelectBox $w={81}><select aria-label="字體"><option>字體</option></select></SelectBox>
                    <SelectBox $w={48}><select aria-label="大小"><option>大小</option></select></SelectBox>
                    <IconButton aria-label="rule"><Svg><path d="M2 8h12" stroke="#333" strokeWidth="1.500" /></Svg></IconButton>
                    <IconButton aria-label="table"><Svg><rect x=".5" y=".5" width="15" height="15" fill="#fff" stroke="#4aa3d8" /><path d="M1 2h14" stroke="#8fcdf0" strokeWidth="2" /><path d="M1 3v12" stroke="#8fcdf0" strokeWidth="3" /><path d="M6.500 3v12M10.500 3v12M2 6.500h13M2 9.500h13M2 12.500h13" stroke="#b5dcf2" /></Svg></IconButton>
                  </Tools>
                  <Tools><ToolRow items={formatTools} /></Tools>
                </Group>
                <Group $l={4} $r={4}>
                  <Tools><ToolRow items={alignTools} /></Tools>
                  <Tools><ToolRow items={listTools} /></Tools>
                </Group>
                <BigTools>
                  {bigTools.map(([t, i]) => (
                    <BigTool key={t}>{i}<span>{t}</span></BigTool>
                  ))}
                </BigTools>
                <Group $l={1} $r={4}>
                  <Tools><ToolRow items={extraTop} w={26} /></Tools>
                  <Tools><ToolRow items={extraBottom} w={26} /></Tools>
                </Group>
                <EditorSide $l={0} $r={4}>
                  <Tools $gap={3}>
                    <IconButton $w={16} aria-label="undo">{undo(false)}</IconButton>
                    <SideButton>全屏</SideButton>
                    <SideButton>常用</SideButton>
                  </Tools>
                  <Tools $gap={4}>
                    <IconButton $w={16} aria-label="redo">{undo(true)}</IconButton>
                    <PlainToggle><input type="checkbox" />純文本</PlainToggle>
                  </Tools>
                </EditorSide>
              </EditorBar>
              <EditorBody>
                <Doc>
                  <Quote>
                    <p>hkbw 發表於 2018-2-11 17:31</p>
                    <p>Old news is so 唔識串..我1322 已經係本站貼既野，站方竟然quote 1620</p>
                  </Quote>
                  <p>貼內部嘢好威?</p>
                  <p>還要大肆宣揚自己係司諾登?</p>
                  <p>為咗五舊水各位可以去到幾盡?</p>
                  <p>註：圖片不能刪除，麻煩跟進一下</p>
                </Doc>
                <ScrollTrack>
                  <Arrow />
                  <Thumb $before={9} />
                  <Arrow down />
                </ScrollTrack>
              </EditorBody>
              <StatusBar>
                30 秒後保存 <a href="#">保存數據</a> | <a href="#">恢複數據</a>{'    '}<a href="#">字數檢查</a> | <a href="#">清除內容</a>{'    '}<a href="#">加大編輯框</a> | <a href="#">縮小編輯框</a>
                <Grip width="12" height="12" viewBox="0 0 12 12"><path d="M1 12L12 1M5 12l7-7M9 12l3-3" stroke="#bbb" /></Grip>
              </StatusBar>
            </Editor>

            <OptionsButton>
              <Svg s={5} vb="0 0 5 5"><circle cx="2.500" cy="2.500" r="1.800" fill="#ddd" stroke="#aaa" /></Svg>
              附加選項
            </OptionsButton>
            <SubmitRow>
              <BlueButton $h={26}>保存</BlueButton>
              <a href="#">本版積分規則</a>
            </SubmitRow>

            <Footer>
              <div>
                <p>Powered by <a href="#"><b>Discuz!</b></a> X3.3</p>
                <p>© 2001-2013 <Maker href="#">Comsenz Inc.</Maker></p>
              </div>
              <FooterRight>
                <a href="#">站規</a><i>|</i><a href="#"><b>hkitalk.net 香港交通資訊網</b></a>
                <small>GMT+8, 2018-2-11 19:58</small>
              </FooterRight>
            </Footer>
          </Content>

          <FloatNav>
            <IconButton $w={40} $h={30} aria-label="top"><Svg><path d="M0 1.500h16" stroke="#aaa" strokeWidth="2" /><path d="M8 5L2.500 10.500h2V15h7v-4.500h2z" stroke="#aaa" strokeWidth="1.600" /></Svg></IconButton>
            <IconButton $w={40} $h={31} aria-label="list"><Svg><path d="M0 3h3M5 3h11M0 8h3M5 8h11M0 13h3M5 13h11" stroke="#aaa" strokeWidth="3" /></Svg></IconButton>
          </FloatNav>

          <Dialog role="dialog" aria-label="upload">
            <DialogTabs>
              <DialogTab $active>普通上傳</DialogTab>
              <DialogTab>網絡圖片</DialogTab>
              <DialogClose aria-label="close"><Close c="#fff" s={8} /></DialogClose>
            </DialogTabs>
            <DialogBody>
              <FileRow>
                <input type="file" id="file" />
                <label htmlFor="file">選擇檔案</label>
                未選擇任何檔案
              </FileRow>
              <UploadRow>
                <BlueButton $h={23}>上傳</BlueButton>
                ←選擇完文件後請點擊「上傳」按鈕
              </UploadRow>
              <Tip>
                <Svg s={12} h={14} vb="0 0 12 14"><circle cx="6" cy="5" r="4.500" fill="#ffd92e" stroke="#e2a80e" /><circle cx="5" cy="4" r="1.500" fill="#fffbd0" /><path d="M4 10h4v3H4z" fill="#999" /></Svg>
                <span>文件尺寸: <em>大小不限制</em> , 可用擴展名: <em>jpg, jpeg, gif, png</em></span>
              </Tip>
            </DialogBody>
            <DialogFooter><BlueButton $h={23}>確定</BlueButton></DialogFooter>
          </Dialog>
        </Page>
        <ScrollTrack>
          <Arrow />
          <Thumb $before={252} />
          <Arrow down tall={24} />
        </ScrollTrack>
      </Viewport>

      <TaskBar>
        {tasks.map((t) => (
          <Task key={t.n} aria-label={t.n} $active={t.active}>{t.i}</Task>
        ))}
        <Tray>
          <TrayItem $w={36} aria-label="people"><Svg><circle cx="11" cy="4" r="3" stroke="#fff" /><circle cx="5" cy="8" r="2.500" stroke="#fff" /><path d="M1 15c0-5 8-5 8 0M10 8c3-1 5 1 5 4" stroke="#fff" /></Svg></TrayItem>
          <TrayItem $w={36} aria-label="hidden icons"><Svg s={12} vb="0 0 12 12"><path d="M1 9l5-5 5 5" stroke="#fff" strokeWidth="1.500" /></Svg></TrayItem>
          <TrayItem $w={18} aria-label="network"><Svg><path d="M1 13C1 7 6 2 13 2M4 14c0-5 4-9 9-9M7 14c0-3 3-6 6-6M10 14c0-2 1-3 3-3" stroke="#ddd" strokeWidth="1.200" /><circle cx="12.500" cy="13.500" r="1.300" fill="#fff" /></Svg></TrayItem>
          <TrayItem $w={24} aria-label="volume"><Svg s={17}><path d="M1 5.500h2.500L7 2.500v11l-3.500-3H1z" stroke="#fff" /><path d="M9 6q1.500 2 0 4M11 4.500q3 3.500 0 7M13 3q4 5 0 10" stroke="#fff" /></Svg></TrayItem>
          <TrayItem $w={24}>英</TrayItem>
          <TrayItem $w={32}><Ime>倉</Ime></TrayItem>
          <Clock>19:58<br />11/2/2018</Clock>
          <TrayItem $w={40} aria-label="notifications"><Svg s={28} h={26} vb="2 0 28 26"><path d="M2 3h16v12h-8l-3 3v-3H2z" fill="#fff" /><path d="M5 6h10M5 9h10M5 12h6" stroke="#222" /><circle cx="18" cy="17" r="7.500" fill="#333" stroke="#999" />{letter('1', 18, 21, 11, '#fff')}</Svg></TrayItem>
          <TrayEdge />
        </Tray>
      </TaskBar>
    </Screen>
  );
}
